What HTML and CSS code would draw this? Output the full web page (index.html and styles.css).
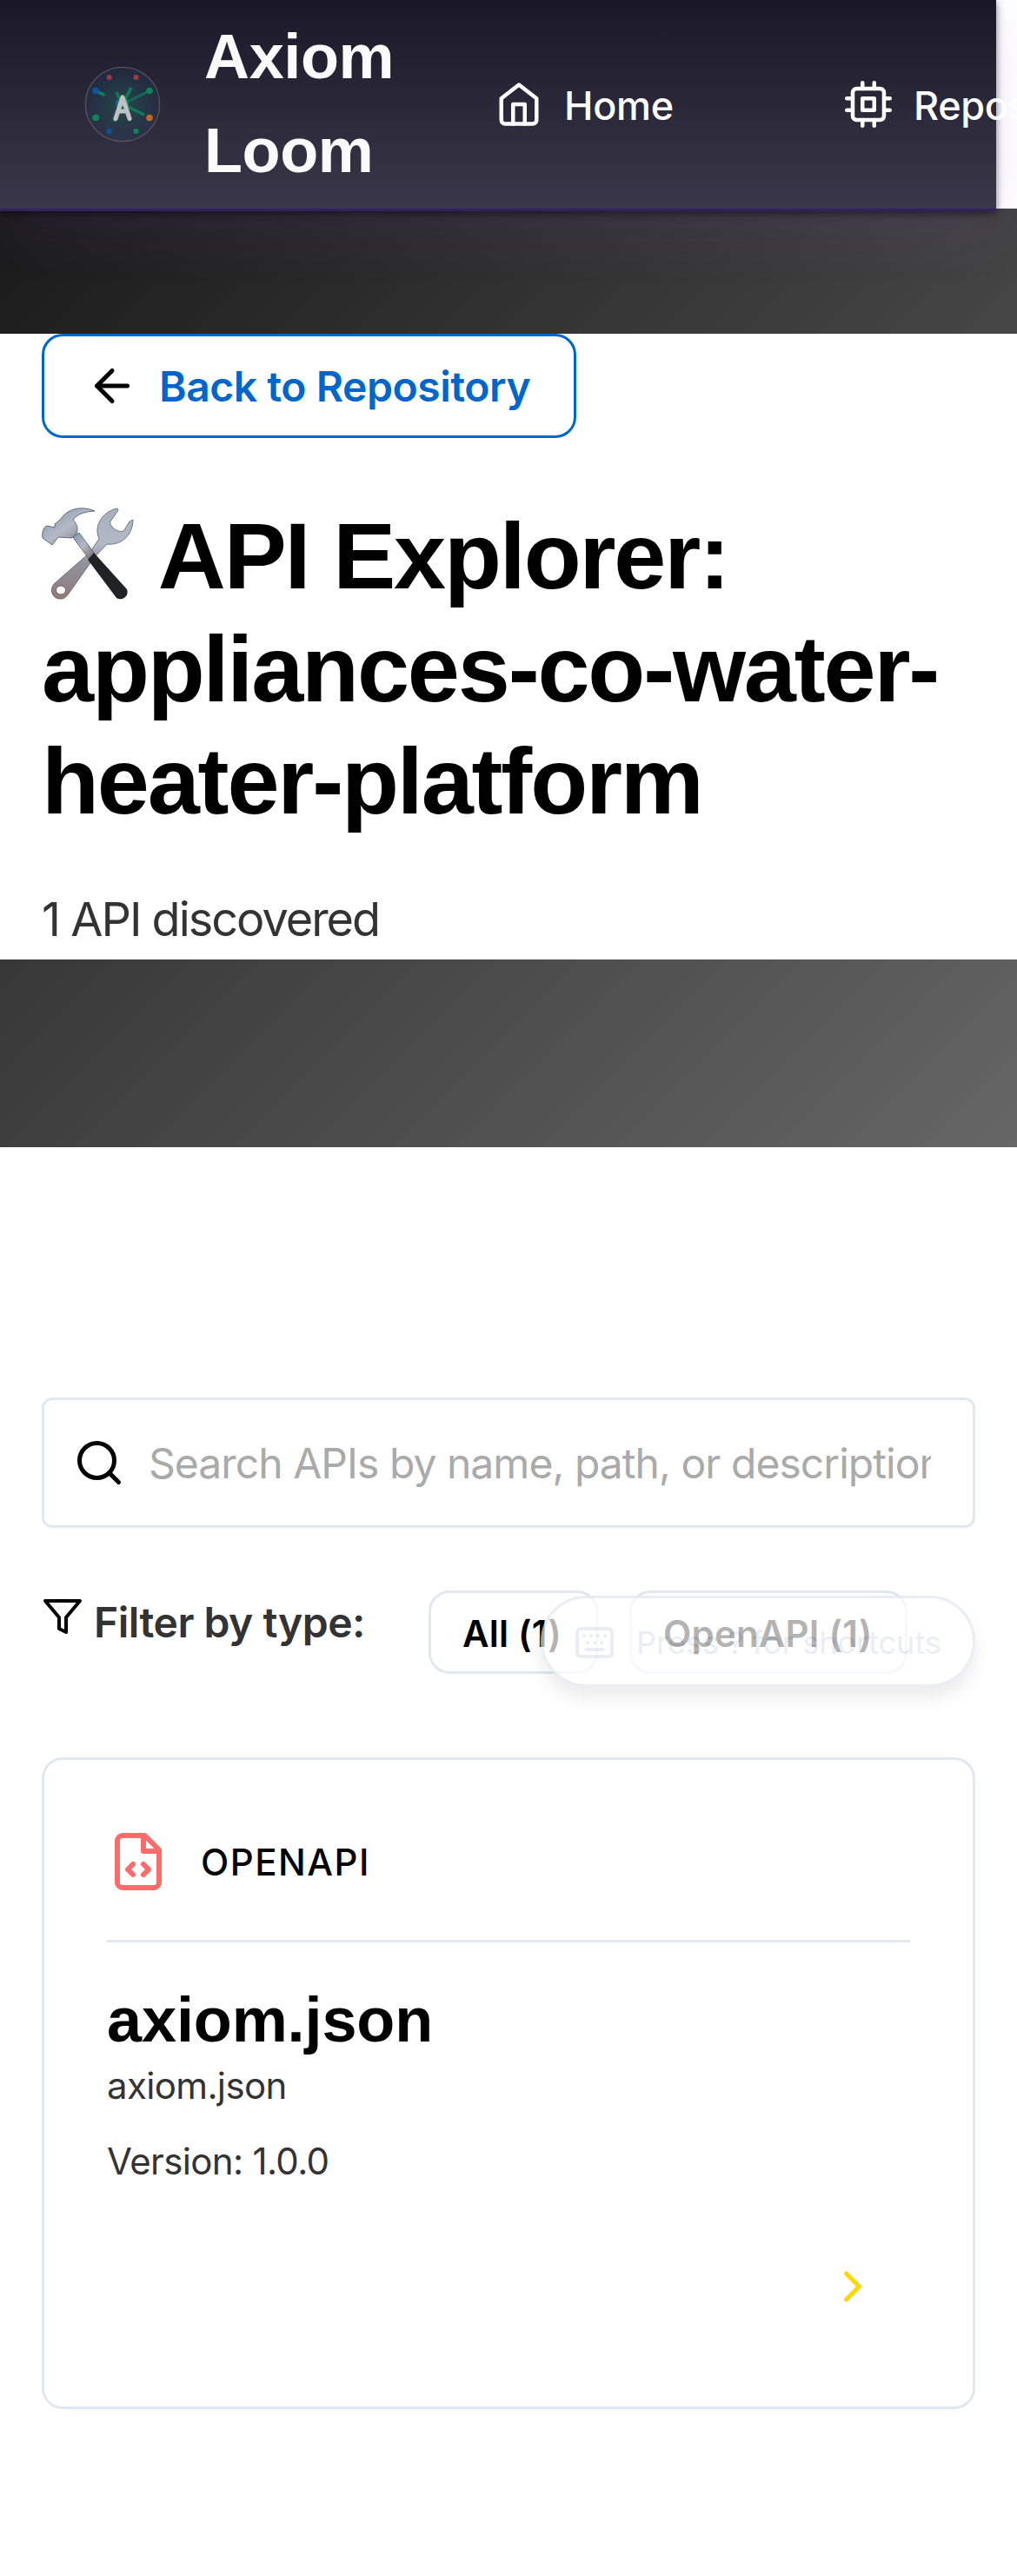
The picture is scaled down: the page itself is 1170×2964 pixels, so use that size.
FILE: index.html
```html
<!DOCTYPE html>
<html lang="en">
<head>
<meta charset="utf-8">
<title>Axiom Loom - API Explorer</title>
<link rel="stylesheet" href="styles.css">
</head>
<body>
<header class="navbar">
  <svg class="logo" viewBox="0 0 90 90">
    <defs>
      <radialGradient id="glow"><stop offset="0" stop-color="#0f9960" stop-opacity=".3"/><stop offset="1" stop-color="#106ba3" stop-opacity=".08"/></radialGradient>
    </defs>
    <circle cx="45" cy="45" r="42.7" fill="url(#glow)" stroke="#545361" stroke-width="1.3"/>
    <g stroke="#117a5a" stroke-width="3.6">
      <path d="M45 45 L76 29.5" stroke="#176355"/>
      <path d="M45 45 L70 57M45 45 L55 26M45 45 L38 31M14 29.5 L24.500 34.500M14 60.500 L18 59M38 59 L35 65"/>
    </g>
    <circle cx="41" cy="44" r="4" fill="#106ba3"/>
    <circle cx="47" cy="44" r="5" fill="#0f9960"/>
    <g fill="#a73546"><circle cx="29.700" cy="14" r="3"/><circle cx="60.500" cy="14" r="3"/></g>
    <g fill="#0d8558"><circle cx="76" cy="29.500" r="3.800"/><circle cx="14" cy="60.500" r="3.800"/><circle cx="60.500" cy="76" r="3"/></g>
    <g fill="#0c53a5"><circle cx="14" cy="29.500" r="3.800"/><circle cx="29.700" cy="76" r="3"/></g>
    <circle cx="76" cy="60.500" r="3.800" fill="#c26920"/>
    <path d="M37 61.500 L45 37 L53 61.500M40 53H50" fill="none" stroke="#bfbfc4" stroke-width="5.200" stroke-linecap="round" stroke-linejoin="round"/>
  </svg>
  <span class="brand">Axiom Loom</span>
  <nav class="links">
    <a class="link">
      <svg class="icon" viewBox="0 0 24 24"><path d="M3 9l9-7 9 7v11a2 2 0 0 1-2 2H5a2 2 0 0 1-2-2z"/><path d="M9 22V12h6v10"/></svg>
      <span>Home</span>
    </a>
    <a class="link">
      <svg class="icon" viewBox="0 0 24 24"><rect x="4" y="4" width="16" height="16" rx="2"/><path d="M9 9h6v6H9zM9 1v3M15 1v3M9 20v3M15 20v3M20 9h3M20 15h3M1 9h3M1 15h3"/></svg>
      <span>Repositories</span>
    </a>
  </nav>
</header>
<section class="hero">
  <div class="hero-content">
    <a class="back">
      <svg class="icon" viewBox="0 0 24 24"><path d="M19 12H5M12 19l-7-7 7-7"/></svg>
      <span>Back to Repository</span>
    </a>
    <h1 class="title"><svg class="tools" viewBox="0 0 106 108">
        <defs>
          <linearGradient id="steel" x1="0" y1="0" x2="1" y2="1"><stop offset="0" stop-color="#7f95ad"/><stop offset=".5" stop-color="#b4bac6"/><stop offset="1" stop-color="#6d6468"/></linearGradient>
          <linearGradient id="rod" x1="0" y1="0" x2="0" y2="1"><stop offset="0" stop-color="#a9b0be"/><stop offset=".4" stop-color="#b3b8c5"/><stop offset=".6" stop-color="#8e939e"/><stop offset="1" stop-color="#94787a"/></linearGradient>
        </defs>
        <path d="M87 2 C71 5 59 21 66 37 L55 53 L14 89 C8 97 13 107 23 106 C26 106 29 103 31 100 L60 59 L75 43 C90 45 105 34 105 15 L101 17 L95 27 C90 32 77 23 79 17 L88 4Z" fill="url(#rod)" stroke="#5b6069" stroke-width=".8"/>
        <ellipse cx="22" cy="96" rx="5.500" ry="5" fill="#fff" stroke="#77656a"/>
        <path d="M35 34 L43 30 L61 54 L55 61Z" fill="url(#steel)" stroke="#55585f" stroke-width=".8"/>
        <path d="M53 61 L60 53 L98 95 C101 103 92 109 86 105Z" fill="#202224"/>
        <path d="M61 5 C45-2 29 3 22 14 L15 20 L15 24 L6 22 C1 24 0 32 1 36 L12 44 L19 35 L34 36 C43 32 43 22 36 15 C43 7 50 6 61 5Z" fill="url(#steel)" stroke="#46515f" stroke-width=".8"/>
      </svg> API Explorer: appliances-co-water-heater-platform</h1>
    <p class="count">1 API discovered</p>
  </div>
</section>
<main class="main">
  <label class="search">
    <svg class="icon" viewBox="0 0 24 24"><circle cx="11" cy="11" r="8"/><path d="M21 21l-4.350-4.350"/></svg>
    <span class="placeholder">Search APIs by name, path, or description...</span>
  </label>
  <div class="filters">
    <svg class="icon" viewBox="0 0 24 24"><path d="M22 3H2l8 9.460V19l4 2v-8.540z"/></svg>
    <span class="filter-label">Filter by type:</span>
    <button class="chip chip-all">All (1)</button>
    <button class="chip chip-openapi">OpenAPI (1)</button>
    <div class="hint">
      <svg class="icon" viewBox="0 0 24 24"><rect x="2" y="4" width="20" height="16" rx="2"/><path d="M6 8h.01M10 8h.01M14 8h.01M18 8h.01M8 12h.01M12 12h.01M16 12h.01M7 16h10"/></svg>
      <span>Press ? for shortcuts</span>
    </div>
  </div>
  <article class="card">
    <div class="card-head">
      <svg class="icon" viewBox="0 0 24 24"><path d="M14.500 2H6a2 2 0 0 0-2 2v16a2 2 0 0 0 2 2h12a2 2 0 0 0 2-2V7.500z"/><path d="M14 2v6h6M10 13l-2 2 2 2M14 17l2-2-2-2"/></svg>
      <span>OPENAPI</span>
    </div>
    <h3 class="card-title">axiom.json</h3>
    <p class="path">axiom.json</p>
    <p class="version">Version: 1.0.0</p>
    <div class="card-foot"><svg class="icon" viewBox="0 0 24 24"><path d="M9 18l6-6-6-6"/></svg></div>
  </article>
</main>
</body>
</html>
```

FILE: styles.css
```css
* { box-sizing: border-box; margin: 0; padding: 0; }
html { overflow: hidden; }
body {
  width: 1170px;
  height: 2964px;
  overflow: hidden;
  background: #fff;
  font-family: Inter, "Liberation Sans", sans-serif;
  color: #000;
}
.icon {
  flex: none;
  fill: none;
  stroke: currentColor;
  stroke-width: 2;
  stroke-linecap: round;
  stroke-linejoin: round;
}
.navbar {
  position: relative;
  z-index: 1;
  display: flex;
  align-items: center;
  width: 1146px;
  height: 243px;
  margin-bottom: -3px;
  padding: 0 0 0 96px;
  background: linear-gradient(#1a1827, #3a374a);
  border-bottom: 3px solid #2f235f;
  box-shadow: 0 3px 9px rgba(0, 0, 0, .5), 0 12px 72px rgba(139, 92, 246, .12);
}
.logo { flex: none; width: 90px; height: 90px; }
.brand {
  flex: none;
  width: 240px;
  margin-left: 49px;
  padding-bottom: 3px;
  font: bold 72px/108px "Liberation Sans", sans-serif;
  letter-spacing: -.360px;
  color: #fafafa;
}
.links { display: flex; gap: 197px; margin-left: 95px; }
.link {
  display: flex;
  align-items: center;
  gap: 24px;
  font-size: 45px;
  font-weight: 500;
  letter-spacing: -.300px;
  color: #fff;
}
.link span { padding: 3px 0 0 1px; }
.link .icon { width: 54px; height: 54px; }
.hero {
  height: 1080px;
  padding: 144px 0 216px;
  background: linear-gradient(135deg, #1a1a1a, #666);
}
.hero-content { height: 720px; padding: 0 48px; background: #fff; }
.back {
  display: inline-flex;
  align-items: center;
  gap: 24px;
  width: 615px;
  height: 120px;
  padding-left: 48px;
  border: 3px solid #06c;
  border-radius: 24px;
  font-size: 48px;
  font-weight: 600;
  letter-spacing: -.450px;
  color: #06c;
  white-space: nowrap;
}
.back .icon { width: 60px; height: 60px; color: #000; }
.title {
  margin-top: 71px;
  font: bold 108px/129.600px "Liberation Sans", sans-serif;
  letter-spacing: -2.160px;
}
.tools { width: 106px; height: 108px; margin-right: 4px; vertical-align: -14px; }
.count {
  margin-top: 53px;
  font-size: 54px;
  line-height: 81px;
  letter-spacing: -2px;
  color: #333;
}
.main { padding: 288px 48px 0; }
.search {
  display: flex;
  align-items: center;
  gap: 27px;
  height: 150px;
  padding: 0 48px 0 33px;
  border: 3px solid #e2e8f0;
  border-radius: 12px;
}
.search .icon { width: 60px; height: 60px; }
.placeholder {
  flex: 1;
  overflow: hidden;
  font-size: 48px;
  letter-spacing: -.950px;
  white-space: nowrap;
  color: #aaa;
}
.filters {
  position: relative;
  display: flex;
  align-items: flex-start;
  height: 96px;
  margin-top: 72px;
  white-space: nowrap;
}
.filters > .icon { width: 48px; height: 48px; margin-top: 6px; }
.filter-label {
  width: 382px;
  margin-left: 12px;
  font-size: 48px;
  line-height: 74px;
  font-weight: 600;
  letter-spacing: -.500px;
  color: #333;
}
.chip {
  height: 96px;
  margin: 0 33px 0 3px;
  padding: 2px 0 0 36px;
  border: 3px solid #e2e8f0;
  border-radius: 24px;
  background: #fff;
  font: 600 42px Inter, sans-serif;
  letter-spacing: .200px;
  text-align: left;
  color: #000;
}
.chip-all { width: 195px; }
.chip-openapi { width: 320px; }
.hint {
  position: absolute;
  top: 6px;
  right: 0;
  display: flex;
  align-items: center;
  gap: 24px;
  width: 500px;
  height: 105px;
  padding: 3px 0 0 35px;
  border: 3px solid #e2e8f0;
  border-radius: 53px;
  background: #fff;
  box-shadow: 0 12px 18px rgba(0, 0, 0, .1);
  font-size: 36px;
  color: #e2e8f0;
  opacity: .7;
}
.hint .icon { width: 48px; height: 48px; }
.card {
  height: 750px;
  margin-top: 96px;
  padding: 72px;
  border: 3px solid #e2e8f0;
  border-radius: 24px;
}
.card-head {
  display: flex;
  align-items: center;
  gap: 36px;
  height: 138px;
  padding-bottom: 45px;
  border-bottom: 3px solid #e2e8f0;
  font-size: 42px;
  font-weight: 500;
  letter-spacing: 1.500px;
}
.card-head .icon { width: 72px; height: 72px; color: #ff6b6b; }
.card-title {
  margin-top: 46px;
  font: bold 72px/86px "Liberation Sans", sans-serif;
  letter-spacing: -.100px;
}
.path, .version {
  font-size: 42px;
  line-height: 63px;
  letter-spacing: -.650px;
  color: #333;
}
.path { margin-top: 1px; }
.version { margin-top: 24px; }
.card-foot { display: flex; justify-content: flex-end; padding: 83px 36px 0; }
.card-foot .icon { width: 60px; height: 60px; color: #ffd700; }
```
